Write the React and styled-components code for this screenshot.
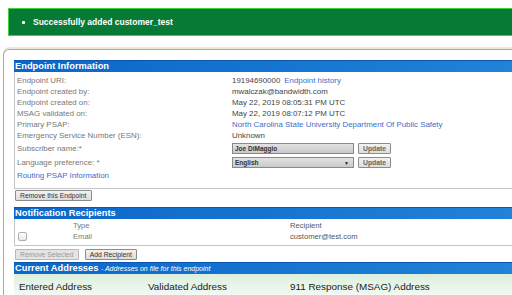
import React from "react";
import styled, { createGlobalStyle } from "styled-components";

const GlobalStyle = createGlobalStyle`
  html, body {
    margin: 0;
    padding: 0;
    background: #fff;
    overflow: hidden;
  }
  body {
    font-family: "Liberation Sans", Arial, sans-serif;
  }
`;

const Page = styled.div`
  width: 580px;
  height: 295px;
  overflow: hidden;
  padding-top: 8px;
  box-sizing: border-box;
`;

const Banner = styled.div`
  margin-left: 8px;
  height: 26px;
  background: #077a35;
  border: 1px solid #3fd43f;
  border-right: none;
  display: flex;
  align-items: center;
  padding-left: 13px;
  color: #fff;
  font-weight: bold;
  font-size: 8.5px;
`;

const Bullet = styled.span`
  width: 3px;
  height: 3px;
  background: #fff;
  border-radius: 1px;
  margin-right: 8px;
`;

const Panel = styled.div`
  margin: 13px 0 0 3px;
  border-top: 1px solid #a8a8a8;
  border-left: 1px solid #a8a8a8;
  border-radius: 6px 0 0 0;
  box-shadow: 0 -2px 0 #ece8dc;
  padding: 10px 0 0 10px;
  height: 260px;
`;

const SectionHeader = styled.div`
  height: 11px;
  background: linear-gradient(to right, #0b66c9, #2486da);
  border-top: 1px solid #0a58ad;
  color: #fff;
  font-weight: bold;
  font-size: 9.3px;
  line-height: 11px;
  padding-left: 1px;
  white-space: nowrap;
`;

const Subtitle = styled.span`
  font-weight: normal;
  font-style: italic;
  font-size: 7px;
`;

const SectionBody = styled.div`
  border-left: 1px solid #c4c4c4;
  border-bottom: 1px solid #c4c4c4;
  padding: ${({ $pad }) => $pad || "3px 0 7px 2px"};
`;

const InfoGrid = styled.div`
  display: grid;
  grid-template-columns: 215px 1fr;
  font-size: 7.9px;
`;

const Label = styled.div`
  color: #777;
  height: ${({ $h }) => $h || 11}px;
  display: flex;
  align-items: center;
`;

const Value = styled.div`
  color: #444;
  height: ${({ $h }) => $h || 11}px;
  display: flex;
  align-items: center;
  gap: 4px;
  white-space: nowrap;
`;

const Link = styled.span`
  color: #3a6fc8;
`;

const FullRow = styled.div`
  grid-column: 1 / span 2;
  height: 11px;
  display: flex;
  align-items: center;
`;

const Field = styled.div`
  width: 114px;
  height: 9px;
  border: 1px solid #8a8a8a;
  background: linear-gradient(#e2e2e2, #c9c9c9);
  font-size: 6.5px;
  font-weight: bold;
  color: #333;
  display: flex;
  align-items: center;
  justify-content: space-between;
  padding: 0 4px 0 2px;
`;

const Arrow = styled.span`
  font-size: 5px;
  color: #222;
`;

const SmallButton = styled.button`
  font-family: "Liberation Sans", Arial, sans-serif;
  height: 11px;
  padding: 0 4px;
  border: 1px solid ${({ disabled }) => (disabled ? "#b8b8b8" : "#8c8c8c")};
  background: ${({ disabled }) =>
    disabled ? "#e4e4e4" : "linear-gradient(#f2f2f2, #dcdcdc)"};
  color: ${({ disabled }) => (disabled ? "#9a9a9a" : "#333")};
  font-size: 6.8px;
  line-height: 9px;
  border-radius: 1px;
  margin: 0;
`;

const UpdateButton = styled(SmallButton)`
  font-weight: bold;
  color: #666;
`;

const ButtonRow = styled.div`
  display: flex;
  gap: 6px;
  padding: ${({ $pad }) => $pad || "1px 0 6px 1px"};
`;

const RecipientTable = styled.div`
  display: grid;
  grid-template-columns: 57px 217px 1fr;
  font-size: 7.6px;
`;

const Cell = styled.div`
  height: 11px;
  display: flex;
  align-items: center;
  color: ${({ $dark }) => ($dark ? "#555" : "#777")};
`;

const Check = styled.span`
  width: 7px;
  height: 7px;
  border: 1px solid #b0b0b0;
  border-radius: 2px;
  background: linear-gradient(#fff, #e8e8e8);
  margin-left: 2px;
`;

const AddressHead = styled.div`
  display: grid;
  grid-template-columns: 129px 142px 1fr;
  height: 24px;
  align-items: center;
  padding-left: 5px;
  background: linear-gradient(#dbefdc, #f6fbf6);
  font-size: 9.9px;
  color: #1a1a1a;
`;

export default function App() {
  return (
    <Page>
      <GlobalStyle />
      <Banner>
        <Bullet />
        Successfully added customer_test
      </Banner>
      <Panel>
        <SectionHeader>Endpoint Information</SectionHeader>
        <SectionBody>
          <InfoGrid>
            <Label>Endpoint URI:</Label>
            <Value>
              19194690000<Link>Endpoint history</Link>
            </Value>
            <Label>Endpoint created by:</Label>
            <Value>mwalczak@bandwidth.com</Value>
            <Label>Endpoint created on:</Label>
            <Value>May 22, 2019 08:05:31 PM UTC</Value>
            <Label>MSAG validated on:</Label>
            <Value>May 22, 2019 08:07:12 PM UTC</Value>
            <Label>Primary PSAP:</Label>
            <Value>
              <Link>North Carolina State University Department Of Public Safety</Link>
            </Value>
            <Label>Emergency Service Number (ESN):</Label>
            <Value>Unknown</Value>
            <Label $h={14}>Subscriber name:*</Label>
            <Value $h={14}>
              <Field>Joe DiMaggio</Field>
              <UpdateButton>Update</UpdateButton>
            </Value>
            <Label $h={15}>Language preference: *</Label>
            <Value $h={15}>
              <Field>
                English<Arrow>▼</Arrow>
              </Field>
              <UpdateButton>Update</UpdateButton>
            </Value>
            <FullRow>
              <Link>Routing PSAP Information</Link>
            </FullRow>
          </InfoGrid>
        </SectionBody>
        <ButtonRow>
          <SmallButton>Remove this Endpoint</SmallButton>
        </ButtonRow>
        <SectionHeader>Notification Recipients</SectionHeader>
        <SectionBody $pad="1px 0 3px 1px">
          <RecipientTable>
            <Cell />
            <Cell>Type</Cell>
            <Cell $dark>Recipient</Cell>
            <Cell>
              <Check />
            </Cell>
            <Cell>Email</Cell>
            <Cell $dark>customer@test.com</Cell>
          </RecipientTable>
        </SectionBody>
        <ButtonRow $pad="3px 0 2px 1px">
          <SmallButton disabled>Remove Selected</SmallButton>
          <SmallButton>Add Recipient</SmallButton>
        </ButtonRow>
        <SectionHeader>
          Current Addresses <Subtitle>- Addresses on file for this endpoint</Subtitle>
        </SectionHeader>
        <AddressHead>
          <span>Entered Address</span>
          <span>Validated Address</span>
          <span>911 Response (MSAG) Address</span>
        </AddressHead>
      </Panel>
    </Page>
  );
}
